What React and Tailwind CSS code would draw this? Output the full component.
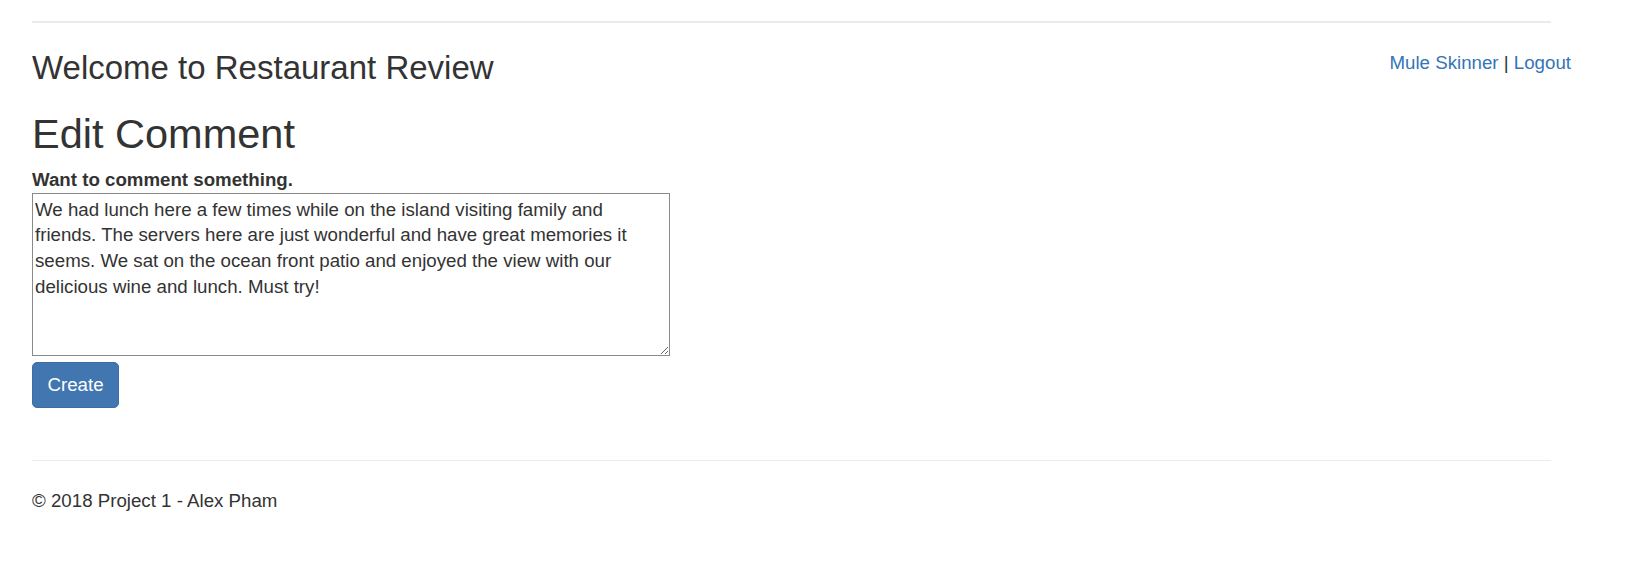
export default function App() {
  const text =
    "We had lunch here a few times while on the island visiting family and friends. The servers here are just wonderful and have great memories it seems. We sat on the ocean front patio and enjoyed the view with our delicious wine and lunch. Must try!";

  return (
    <div className="min-h-screen bg-white font-['Liberation_Sans',Arial,sans-serif] text-[#333333]">
      <div className="pl-[32px] pt-[21px]">
        <div className="w-[1519px] h-[1.5px] bg-[#ebebeb]" />

        <div className="mt-[25px] flex w-[1539px] items-start justify-between">
          <h3 className="text-[33px] leading-[40px] font-medium">
            Welcome to Restaurant Review
          </h3>
          <div className="mt-px text-[18.7px] leading-[27px]">
            <a href="#" className="text-[#3574b6]">
              Mule Skinner
            </a>{" "}
            |{" "}
            <a href="#" className="text-[#3574b6]">
              Logout
            </a>
          </div>
        </div>

        <h2 className="mt-[23px] text-[41.5px] leading-[46px] font-medium">
          Edit Comment
        </h2>

        <form className="mt-[10px] flex flex-col items-start">
          <label className="text-[18.7px] leading-[26px] font-bold">
            Want to comment something.
          </label>
          <textarea
            className="w-[638px] h-[163px] border-[1.5px] border-[#8a8a8a] px-[2px] py-[3px] text-[18.7px] leading-[25.7px] text-[#333333] outline-none"
            defaultValue={text}
          />
          <button
            type="button"
            className="mt-[6px] rounded-[5px] border border-[#3a6ea5] bg-[#4176b1] px-[14.5px] py-[8.8px] text-[18.7px] leading-[27px] text-white"
          >
            Create
          </button>
        </form>

        <div className="mt-[51.5px] w-[1519px] h-[1.5px] bg-[#ebebeb]" />

        <footer className="mt-[26px] text-[18.7px] leading-[27px]">
          © 2018 Project 1 - Alex Pham
        </footer>
      </div>
    </div>
  );
}
